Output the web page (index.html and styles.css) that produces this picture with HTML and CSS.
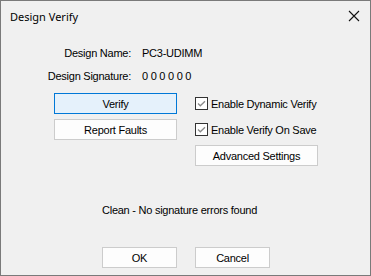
FILE: index.html
```html
<!DOCTYPE html>
<html lang="en">
<head>
  <meta charset="UTF-8" />
  <title>Design Verify</title>
  <link rel="stylesheet" href="styles.css">
</head>
<body>
  <div class="window">
    <div class="titlebar">
      <span class="title">Design Verify</span>
      <svg class="close" width="12" height="12" viewBox="0 0 12 12"><path d="M1 1L11 11M11 1L1 11" stroke="#111" stroke-width="1.1" fill="none"/></svg>
    </div>

    <div class="info">
      <span class="lbl">Design Name:</span><span>PC3-UDIMM</span>
      <span class="lbl">Design Signature:</span><span>0 0 0 0 0 0</span>
    </div>

    <div class="controls">
      <button class="btn btn-focus">Verify</button>
      <label class="chk"><svg width="13" height="13" viewBox="0 0 13 13"><rect x="0.5" y="0.5" width="12" height="12" fill="#fff" stroke="#333"/><path d="M3 6.5L5.3 8.8L10 4.2" stroke="#8a8a8a" stroke-width="1.3" fill="none"/></svg>Enable Dynamic Verify</label>
      <button class="btn">Report Faults</button>
      <label class="chk"><svg width="13" height="13" viewBox="0 0 13 13"><rect x="0.5" y="0.5" width="12" height="12" fill="#fff" stroke="#333"/><path d="M3 6.5L5.3 8.8L10 4.2" stroke="#8a8a8a" stroke-width="1.3" fill="none"/></svg>Enable Verify On Save</label>
      <span></span>
      <button class="btn">Advanced Settings</button>
    </div>

    <p class="status">Clean - No signature errors found</p>

    <div class="footer">
      <button class="btn btn-small">OK</button>
      <button class="btn btn-small">Cancel</button>
    </div>
  </div>
</body>
</html>
```

FILE: styles.css
```css
body,html{margin:0;padding:0;background:#f0f0f0;}
.window{width:371px;height:276px;box-sizing:border-box;border:1px solid #7a7a7a;background:#f0f0f0;font-family:'Liberation Sans',Arial,sans-serif;font-size:11px;letter-spacing:-0.25px;color:#000;white-space:nowrap;overflow:hidden;}
.titlebar{height:30px;display:flex;align-items:center;justify-content:space-between;padding:0 9px 0 9px;box-sizing:border-box;}
.title{font-family:'Noto Sans',sans-serif;font-size:11px;letter-spacing:0;line-height:16px;margin-top:1px;}
.close{margin-right:1px;}
.info{display:grid;grid-template-columns:90px auto;column-gap:11px;row-gap:10px;margin:16px 0 0 40px;line-height:13px;}
.lbl{text-align:right;}
.controls{display:grid;grid-template-columns:123px 123px;grid-auto-rows:21px;column-gap:18px;row-gap:5px;margin:10px 0 0 53px;}
.btn{font-family:inherit;font-size:11px;letter-spacing:-0.25px;color:#000;background:#fdfdfd;border:1px solid #cccccc;padding:0;height:21px;margin:0;}
.btn-focus{background:#e5f1fb;border-color:#0078d7;}
.chk{display:flex;align-items:center;gap:3px;}
.status{margin:38px 0 0 101px;line-height:13px;}
.footer{display:flex;gap:18px;margin:30px 0 0 101px;}
.btn-small{width:75px;}
```
